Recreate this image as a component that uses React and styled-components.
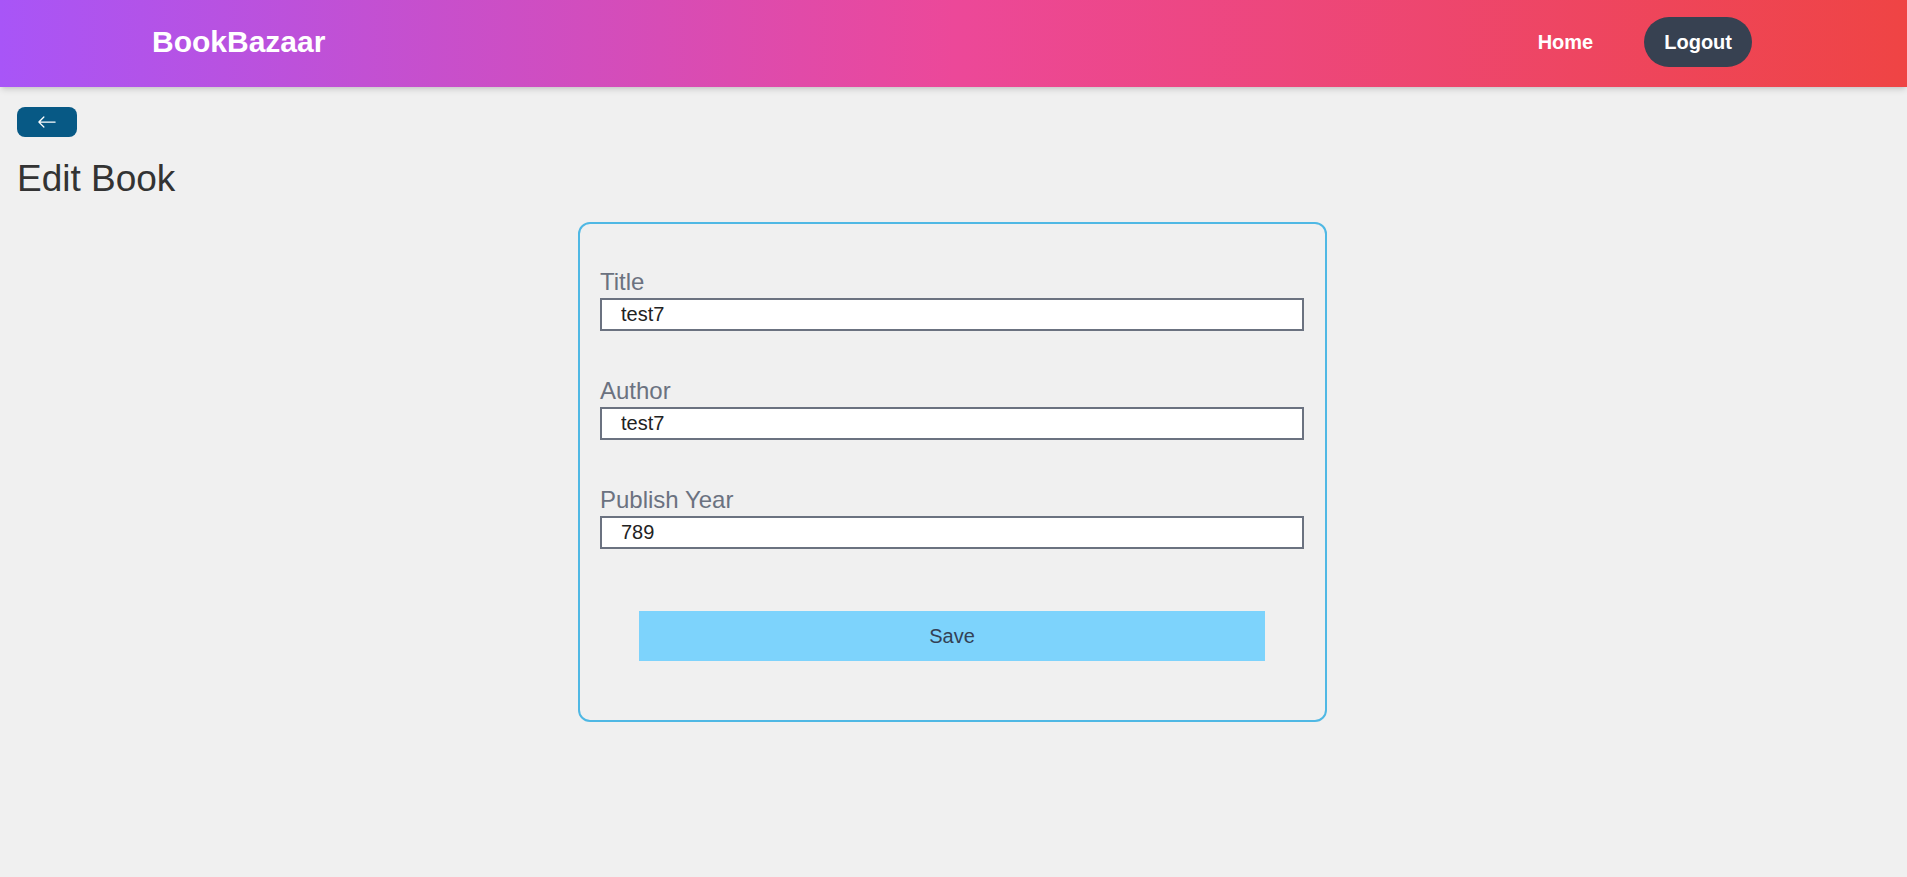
import React, { useState } from "react";
import styled, { createGlobalStyle } from "styled-components";
import { BsArrowLeft } from "react-icons/bs";

const GlobalStyle = createGlobalStyle`
  * {
    box-sizing: border-box;
  }
  body {
    margin: 0;
    background: #f0f0f0;
    font-family: "Liberation Sans", Arial, sans-serif;
  }
`;

function App() {
  // 폼 값
  const [title, setTitle] = useState("test7");
  const [author, setAuthor] = useState("test7");
  const [publishYear, setPublishYear] = useState("789");

  const fields = [
    { label: "Title", value: title, onChange: setTitle },
    { label: "Author", value: author, onChange: setAuthor },
    { label: "Publish Year", value: publishYear, onChange: setPublishYear },
  ];

  return (
    <>
      <GlobalStyle />
      <Navbar>
        <Logo>BookBazaar</Logo>
        <NavLinks>
          <NavLink href="#">Home</NavLink>
          <LogoutButton>Logout</LogoutButton>
        </NavLinks>
      </Navbar>

      <Page>
        <BackButton aria-label="back">
          <BsArrowLeft size="20" />
        </BackButton>
        <PageTitle>Edit Book</PageTitle>

        <FormCard>
          {fields.map(field => (
            <FieldGroup key={field.label}>
              <Label>{field.label}</Label>
              <Input
                type="text"
                value={field.value}
                onChange={e => field.onChange(e.target.value)}
              />
            </FieldGroup>
          ))}
          <SaveButton>Save</SaveButton>
        </FormCard>
      </Page>
    </>
  );
}

export default App;

const Navbar = styled.nav`
  display: flex;
  align-items: center;
  justify-content: space-between;
  height: 87px;
  padding: 0 155px 3px 152px;
  background: linear-gradient(to right, #a855f7, #ec4899, #ef4444);
  box-shadow: 0 4px 6px -1px rgba(0, 0, 0, 0.12),
    0 2px 4px -2px rgba(0, 0, 0, 0.1);
`;

const Logo = styled.div`
  color: #ffffff;
  font-size: 30px;
  line-height: 36px;
  font-weight: bold;
`;

const NavLinks = styled.div`
  display: flex;
  align-items: center;
  gap: 51px;
`;

const NavLink = styled.a`
  color: #ffffff;
  font-size: 20px;
  line-height: 28px;
  font-weight: bold;
  text-decoration: none;
`;

const LogoutButton = styled.button`
  height: 50px;
  padding: 0 20px;
  border: none;
  border-radius: 9999px;
  background: #374151;
  color: #ffffff;
  font-family: inherit;
  font-size: 20px;
  font-weight: bold;
  cursor: pointer;
`;

const Page = styled.main`
  display: flex;
  flex-direction: column;
  align-items: flex-start;
  padding: 20px 19px 20px 17px;
`;

const BackButton = styled.button`
  display: flex;
  align-items: center;
  justify-content: center;
  width: 60px;
  height: 30px;
  padding: 0;
  border: none;
  border-radius: 8px;
  background: #075985;
  color: #ffffff;
  cursor: pointer;
`;

const PageTitle = styled.h1`
  margin: 22px 0 0;
  font-size: 37px;
  line-height: 40px;
  font-weight: normal;
  color: #333333;
`;

const FormCard = styled.form`
  display: flex;
  flex-direction: column;
  gap: 44px;
  align-self: center;
  width: 749px;
  margin-top: 23px;
  padding: 42px 21px 59px 20px;
  border: 2px solid #4fb8e4;
  border-radius: 12px;
`;

const FieldGroup = styled.div`
  display: flex;
  flex-direction: column;
`;

const Label = styled.label`
  font-size: 24px;
  line-height: 32px;
  color: #6b7280;
`;

const Input = styled.input`
  height: 33px;
  padding: 0 19px;
  border: 2px solid #6b7280;
  background: #ffffff;
  color: #222222;
  font-family: inherit;
  font-size: 20px;
  outline: none;
`;

const SaveButton = styled.button`
  height: 50px;
  margin: 18px 39px 0;
  border: none;
  background: #7dd3fc;
  color: #334155;
  font-family: inherit;
  font-size: 20px;
  cursor: pointer;
`;
